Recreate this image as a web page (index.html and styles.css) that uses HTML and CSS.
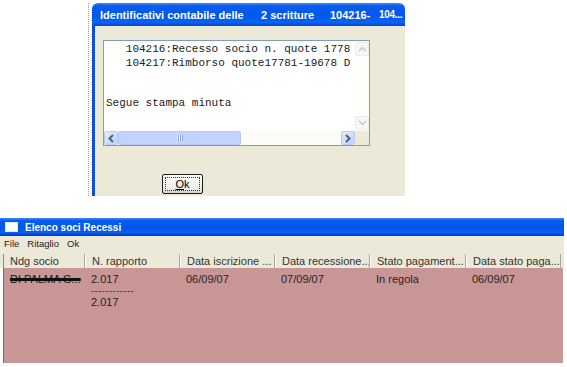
FILE: index.html
```html
<!DOCTYPE html>
<html lang="it">
<head>
    <meta charset="UTF-8">
    <title>Elenco soci Recessi</title>
    <link rel="stylesheet" href="styles.css">
</head>
<body>
    <div class="dialog">
        <div class="dlg-title">
            <span class="t1">Identificativi contabile delle</span>
            <span class="t2">2 scritture</span>
            <span class="t3">104216-</span>
            <span class="t4">104...</span>
        </div>
        <div class="dlg-body">
            <div class="memo">
                <div class="memo-text">   104216:Recesso socio n. quote 1778
   104217:Rimborso quote17781-19678 D


Segue stampa minuta</div>
                <div class="vscroll">
                    <div class="sb-btn sb-dis">
                        <svg width="9" height="6" viewBox="0 0 9 6"><path d="M1 5 L4.5 1.5 L8 5" fill="none" stroke="#c4c8d4" stroke-width="1.5"/></svg>
                    </div>
                    <div class="sb-btn sb-dis">
                        <svg width="9" height="6" viewBox="0 0 9 6"><path d="M1 1 L4.5 4.5 L8 1" fill="none" stroke="#c4c8d4" stroke-width="1.5"/></svg>
                    </div>
                </div>
                <div class="hscroll">
                    <div class="sb-btn">
                        <svg width="6" height="9" viewBox="0 0 6 9"><path d="M5 1 L1.5 4.5 L5 8" fill="none" stroke="#4d6185" stroke-width="2"/></svg>
                    </div>
                    <div class="thumb"><span class="grip"></span></div>
                    <div class="track"></div>
                    <div class="sb-btn">
                        <svg width="6" height="9" viewBox="0 0 6 9"><path d="M1 1 L4.5 4.5 L1 8" fill="none" stroke="#4d6185" stroke-width="2"/></svg>
                    </div>
                </div>
                <div class="corner"></div>
            </div>
            <div class="btn-row">
                <button class="btn"><span class="focus"><u>O</u>k</span></button>
            </div>
        </div>
    </div>

    <div class="window">
        <div class="win-title">
            <span class="win-icon"></span>
            <span>Elenco soci Recessi</span>
        </div>
        <div class="menubar">
            <span>File</span>
            <span>Ritaglio</span>
            <span>Ok</span>
        </div>
        <div class="grid">
            <div class="head">
                <div class="c1">Ndg socio</div>
                <div class="c2">N. rapporto</div>
                <div class="c3">Data iscrizione ...</div>
                <div class="c4">Data recessione...</div>
                <div class="c5">Stato pagament...</div>
                <div class="c6">Data stato paga...</div>
                <div class="c7"></div>
            </div>
            <div class="rows">
                <div class="row">
                    <div class="c1"><span class="scribble">DI PALMA G...</span></div>
                    <div class="c2">2.017<br><span class="dash">------------</span><br>2.017</div>
                    <div class="c3">06/09/07</div>
                    <div class="c4">07/09/07</div>
                    <div class="c5">In regola</div>
                    <div class="c6">06/09/07</div>
                </div>
            </div>
        </div>
    </div>
</body>
</html>
```

FILE: styles.css
```css
body {
    margin: 0;
    background: #fff;
    font-family: "Liberation Sans", Arial, sans-serif;
    font-size: 11px;
    color: #222;
}

/* dialog */
.dialog {
    margin: 3px 0 0 88px;
    width: 313px;
    padding-left: 3px;
    border-left: 1px dotted #9a9a9a;
}
.dlg-title {
    height: 23px;
    display: flex;
    align-items: center;
    padding-left: 8px;
    color: #fff;
    font-weight: bold;
    font-size: 11px;
    white-space: nowrap;
    border-radius: 6px 6px 0 0;
    background: linear-gradient(to bottom, #3d8cf5 0%, #0a5ced 12%, #0058ea 50%, #0a62f0 85%, #0046d2 100%);
}
.dlg-title span { flex-shrink: 0; }
.dlg-title .t1 { width: 161px; }
.dlg-title .t2 { width: 69px; }
.dlg-title .t3 { width: 49px; }
.dlg-title .t4 { font-size: 10px; letter-spacing: -0.3px; }
.dlg-body {
    height: 156px;
    padding: 14px 0 0 8px;
    background: #ece9d8;
    border-left: 3px solid #0b4fd9;
}

.memo {
    width: 265px;
    height: 104px;
    border: 1px solid #7f9db9;
    background: #fff;
    display: grid;
    grid-template-columns: 251px 14px;
    grid-template-rows: 90px 14px;
}
.memo-text {
    font-family: "Liberation Mono", "Courier New", monospace;
    font-size: 11px;
    line-height: 13.5px;
    white-space: pre;
    overflow: hidden;
    padding: 2px 0 0 2px;
    color: #1a1a1a;
}
.vscroll {
    background: #fdfdfa;
    display: flex;
    flex-direction: column;
    justify-content: space-between;
    padding: 1px 0;
}
.sb-btn {
    width: 14px;
    height: 14px;
    display: flex;
    align-items: center;
    justify-content: center;
    box-sizing: border-box;
    border: 1px solid #b7cbf5;
    border-radius: 2px;
    background: linear-gradient(to bottom right, #e4ecfd, #bcd0f8);
}
.sb-btn.sb-dis {
    border-color: #eeede5;
    background: #f7f7f3;
}
.hscroll {
    display: flex;
    background: #fcfcfa;
}
.thumb {
    width: 123px;
    box-sizing: border-box;
    border: 1px solid #b4c8f6;
    border-radius: 2px;
    background: #c3d3fd;
    display: flex;
    align-items: center;
    justify-content: center;
}
.grip {
    width: 6px;
    height: 6px;
    background: repeating-linear-gradient(to right, #eef3fe 0 1px, #8aa6e6 1px 2px);
}
.track {
    flex: 1;
    background: #fbfbf8;
}
.corner {
    background: #ece9d8;
}

.btn-row {
    padding-left: 59px;
    margin-top: 28px;
}
.btn {
    width: 41px;
    height: 20px;
    padding: 2px;
    border: 1px solid #1c1c1c;
    border-radius: 2px;
    background: linear-gradient(to bottom, #fff, #ecebe6 80%, #d6d0c5);
    font-family: "Liberation Sans", Arial, sans-serif;
    font-size: 11px;
    color: #000;
}
.btn .focus {
    display: flex;
    align-items: center;
    justify-content: center;
    height: 100%;
    border: 1px dotted #333;
    box-sizing: border-box;
}

/* list window */
.window {
    margin-top: 22px;
    width: 564px;
}
.win-title {
    height: 18px;
    display: flex;
    align-items: center;
    gap: 7px;
    padding-left: 5px;
    color: #fff;
    font-weight: bold;
    font-size: 10px;
    background: linear-gradient(to bottom, #3d8cf5 0%, #0a5ced 14%, #0055e8 55%, #0a5ef0 80%, #0038c8 100%);
}
.win-icon {
    width: 11px;
    height: 8px;
    background: #fff;
    border: 1px solid #dfe8fb;
}
.menubar {
    height: 15px;
    display: flex;
    align-items: center;
    gap: 8px;
    padding-left: 4px;
    background: #ece9d8;
    font-size: 9.5px;
    color: #222;
}
.grid {
    background: #ece9d8;
    padding-top: 3px;
}
.head, .row {
    display: flex;
    margin-left: 3px;
}
.head > div {
    height: 14px;
    box-sizing: border-box;
    padding: 1px 0 0 6px;
    border-right: 1px solid #aca899;
    border-left: 1px solid #fff;
    background: #ece9d8;
    color: #333;
    white-space: nowrap;
    overflow: hidden;
}
.c1 { width: 82px; }
.c2 { width: 95px; }
.c3 { width: 95px; }
.c4 { width: 95px; }
.c5 { width: 96px; }
.c6 { width: 95px; }
.head .c7 { width: 2px; padding: 0; border: 0; }
.head .c1 { border-left: 1px solid #8c8c8c; }
.rows {
    background: #fff;
}
.rows .row {
    height: 95px;
    width: 560px;
    box-sizing: border-box;
    background: #c99697;
    border-left: 1px solid #7a6a68;
}
.row > div {
    box-sizing: border-box;
    padding: 6px 0 0 6px;
    color: #2a2020;
    white-space: nowrap;
    line-height: 11px;
}
.row .c1 {
    width: 81px;
}
.dash {
    font-size: 9px;
    letter-spacing: 0.6px;
}
.scribble {
    color: #111;
    text-decoration: line-through;
    text-decoration-thickness: 3px;
    text-decoration-color: #111;
}
```
